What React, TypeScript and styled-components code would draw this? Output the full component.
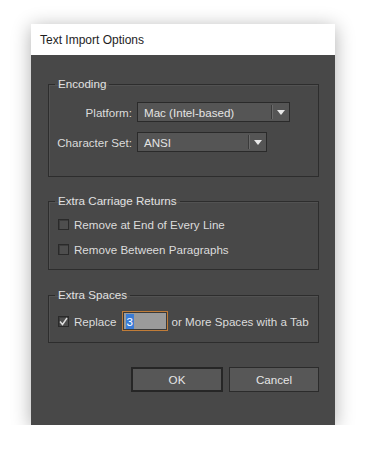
import React from 'react';
import styled, {createGlobalStyle} from 'styled-components';

const GlobalStyle = createGlobalStyle`
    html, body {
        margin: 0;
        background: #ffffff;
        font-family: "Liberation Sans", Arial, sans-serif;
    }
`;

const Page = styled.div`
    padding: 24px 0 0 31px;
`;

const Dialog = styled.div`
    width: 304px;
    height: 401px;
    display: flex;
    flex-direction: column;
    box-shadow: 0 3px 18px rgba(0, 0, 0, 0.32);
`;

const TitleBar = styled.div`
    height: 31px;
    flex: none;
    background: #ffffff;
    display: flex;
    align-items: center;
    padding-left: 9px;
    font-size: 12px;
    color: #1e1e1e;
`;

const Body = styled.div`
    flex: 1;
    background: #484848;
    padding: 0 16px 0 17px;
    display: flex;
    flex-direction: column;
    color: #dcdcdc;
    font-size: 11.6px;
`;

const Group = styled.fieldset<{ $mt: number; $pt: number; $pb: number }>`
    margin: ${p => p.$mt}px 0 0 0;
    padding: ${p => p.$pt}px 8px ${p => p.$pb}px 8px;
    border: 1px solid #2d2d2d;
    box-shadow: inset 1px 1px 0 #525252;
    min-width: 0;
    display: flex;
    flex-direction: column;
`;

const Legend = styled.legend`
    padding: 0 3px;
    margin-left: -2px;
    line-height: 14px;
    font-size: 11.6px;
    color: #e2e2e2;
`;

const FieldRow = styled.div`
    display: flex;
    align-items: center;
    height: 20px;
    & + & {
        margin-top: 10px;
    }
`;

const FieldLabel = styled.span`
    width: 75px;
    text-align: right;
    margin-right: 5px;
    white-space: nowrap;
`;

const Select = styled.div<{ $w: number }>`
    width: ${p => p.$w}px;
    height: 20px;
    box-sizing: border-box;
    background: #555555;
    border: 1px solid #2a2a2a;
    display: flex;
    align-items: center;
    color: #e4e4e4;
`;

const SelectText = styled.span`
    flex: 1;
    padding-left: 6px;
    white-space: nowrap;
`;

const SelectDivider = styled.span`
    width: 1px;
    height: 14px;
    background: #3a3a3a;
    border-right: 1px solid #6a6a6a;
`;

const SelectArrow = styled.span`
    width: 16px;
    display: flex;
    justify-content: center;
    align-items: center;
`;

const CheckRow = styled.label`
    display: flex;
    align-items: center;
    height: 18px;
    white-space: nowrap;
    & + & {
        margin-top: 7px;
    }
`;

const Box = styled.span`
    width: 11px;
    height: 11px;
    flex: none;
    box-sizing: border-box;
    border: 1px solid #2a2a2a;
    background: #4e4e4e;
    box-shadow: inset 1px 1px 0 #3c3c3c;
    margin: 0 5px 0 1px;
    display: flex;
    align-items: center;
    justify-content: center;
`;

const NumberBox = styled.span`
    width: 46px;
    height: 20px;
    flex: none;
    box-sizing: border-box;
    border: 1px solid #c07c38;
    box-shadow: inset 0 0 0 1px #3a3a3a;
    background: #9b9b9b;
    margin: 0 4px 0 5px;
    display: flex;
    align-items: center;
    padding-left: 3px;
`;

const Selected = styled.span`
    background: #3b7cd6;
    color: #ffffff;
    padding: 0 1px;
    line-height: 15px;
`;

const ButtonRow = styled.div`
    display: flex;
    justify-content: flex-end;
    gap: 6px;
    margin-top: 24px;
`;

const Button = styled.button<{ $primary?: boolean; $w: number }>`
    width: ${p => p.$w}px;
    height: 25px;
    box-sizing: border-box;
    background: #575757;
    border: ${p => p.$primary ? '2px solid #262626' : '1px solid #2b2b2b'};
    color: #e6e6e6;
    font-family: inherit;
    font-size: 11.6px;
    padding: 0;
`;

const Arrow = () => (
    <svg width="8" height="5" viewBox="0 0 8 5">
        <polygon points="0,0 8,0 4,5" fill="#e8e8e8"/>
    </svg>
);

const Check = () => (
    <svg width="9" height="9" viewBox="0 0 9 9">
        <path d="M1 4.5 L3.5 7.5 L8 1" stroke="#e0e0e0" strokeWidth="1.4" fill="none"/>
    </svg>
);

const Dropdown = ({value, width}: { value: string; width: number }) => (
    <Select $w={width}>
        <SelectText>{value}</SelectText>
        <SelectDivider/>
        <SelectArrow><Arrow/></SelectArrow>
    </Select>
);

const CheckBox = ({checked, children}: { checked?: boolean; children: React.ReactNode }) => (
    <CheckRow>
        <Box>{checked && <Check/>}</Box>
        {children}
    </CheckRow>
);

export default function App() {
    return <Page>
        <GlobalStyle/>
        <Dialog>
            <TitleBar>Text Import Options</TitleBar>
            <Body>
                <Group $mt={22} $pt={11} $pb={24}>
                    <Legend>Encoding</Legend>
                    <FieldRow>
                        <FieldLabel>Platform:</FieldLabel>
                        <Dropdown value="Mac (Intel-based)" width={153}/>
                    </FieldRow>
                    <FieldRow>
                        <FieldLabel>Character Set:</FieldLabel>
                        <Dropdown value="ANSI" width={130}/>
                    </FieldRow>
                </Group>
                <Group $mt={17} $pt={7} $pb={11}>
                    <Legend>Extra Carriage Returns</Legend>
                    <CheckBox>Remove at End of Every Line</CheckBox>
                    <CheckBox>Remove Between Paragraphs</CheckBox>
                </Group>
                <Group $mt={18} $pt={10} $pb={12}>
                    <Legend>Extra Spaces</Legend>
                    <CheckBox checked>
                        Replace
                        <NumberBox><Selected>3</Selected></NumberBox>
                        or More Spaces with a Tab
                    </CheckBox>
                </Group>
                <ButtonRow>
                    <Button $primary $w={92}>OK</Button>
                    <Button $w={90}>Cancel</Button>
                </ButtonRow>
            </Body>
        </Dialog>
    </Page>;
}
